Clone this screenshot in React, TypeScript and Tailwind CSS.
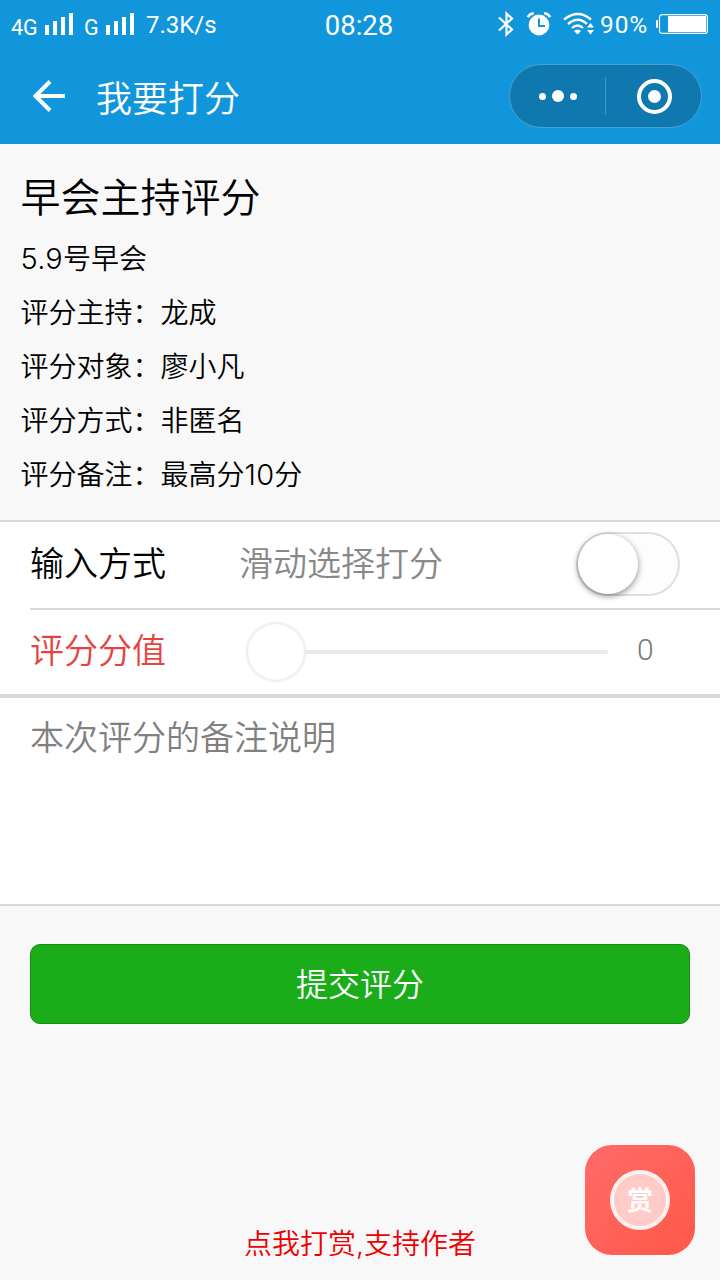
import { useState } from "react";
import type { ReactNode } from "react";

type InfoLine = {
  label: string;
  value: ReactNode;
};

const Digits = ({ children }: { children: ReactNode }) => (
  <span className="text-[29px] leading-none tracking-[0.2px]">{children}</span>
);

const infoLines: InfoLine[] = [
  { label: "评分主持", value: "龙成" },
  { label: "评分对象", value: "廖小凡" },
  { label: "评分方式", value: "非匿名" },
  { label: "评分备注", value: <>最高分<Digits>10</Digits>分</> },
];

const SignalBars = () => (
  <svg width="30" height="22" viewBox="0 0 30 22" fill="currentColor">
    <rect x="1" y="12" width="4" height="10" />
    <rect x="9" y="8" width="4" height="14" />
    <rect x="17" y="4" width="4" height="18" />
    <rect x="25" y="0" width="4" height="22" />
  </svg>
);

const StatusBar = () => (
  <div className="relative flex h-[50px] items-center justify-between pb-[2px] pl-[11px] pr-[12px] font-['Roboto',sans-serif] font-normal text-white">
    {/* Left */}
    <div className="flex items-center">
      <span className="w-[33px] pt-[7px] text-[21.5px] leading-[26px]">4G</span>
      <SignalBars />
      <span className="ml-[10px] w-[21px] pt-[7px] text-[21.5px] leading-[26px]">G</span>
      <SignalBars />
      <span className="ml-[11px] pt-[2px] text-[24px] leading-[28px]">7.3K/s</span>
    </div>

    {/* Clock sits over the middle whatever the sides hold */}
    <span className="absolute left-0 top-[11px] w-[718px] text-center text-[27.5px] leading-[30px]">
      08:28
    </span>

    {/* Right */}
    <div className="flex items-center">
      <svg width="16" height="26" viewBox="0 0 16 26" fill="none" stroke="currentColor" strokeWidth="2.2">
        <path d="M1 6.500 L14 18.500 L8.500 23.500 V2.500 L14 7.500 L1 19.500" />
      </svg>
      <svg className="ml-[13px]" width="24" height="24" viewBox="0 0 24 24">
        <circle cx="12" cy="13" r="10.400" fill="currentColor" />
        <path d="M0.8 5.2 Q2.5 1.6 6.8 1.2 M23.2 5.2 Q21.5 1.6 17.2 1.2" fill="none" stroke="currentColor" strokeWidth="2.6" />
        <path d="M12 6.500 V14 H18" fill="none" stroke="#1296db" strokeWidth="2" />
      </svg>
      <svg className="ml-[12px]" width="32" height="24" viewBox="0 0 32 24">
        <g fill="none" stroke="currentColor" strokeWidth="2.3">
          <path d="M1 7.5 Q15 -3.500 28 7.5" />
          <path d="M5 12 Q15 3.500 24 12" />
          <path d="M9 16 Q14.500 11 20 16" />
        </g>
        <path d="M11 19 Q14.500 16 18 19 L14.500 22.5 Z" fill="currentColor" />
        <path d="M27.500 11 L31 15.500 H24 Z M24 18 H31 L27.500 22.500 Z" fill="currentColor" />
      </svg>
      <span className="ml-[5px] w-[49px] pt-[2px] text-[24.5px] leading-[28px] tracking-[0.9px]">90%</span>
      <svg className="ml-[7px]" width="52" height="20" viewBox="0 0 52 20">
        <rect x="0" y="6" width="2" height="8" rx="1" fill="currentColor" />
        <rect x="3.500" y="0.600" width="47.800" height="18.800" rx="2.500" fill="none" stroke="currentColor" strokeWidth="1.2" />
        <rect x="12" y="2" width="38" height="16" fill="currentColor" />
      </svg>
    </div>
  </div>
);

const NavBar = () => (
  <div className="flex h-[94px] items-center pb-[2px] pl-[32px] pr-[18px] text-white">
    <button aria-label="返回">
      <svg width="34" height="34" viewBox="0 0 34 34" fill="none" stroke="currentColor" strokeWidth="4">
        <path d="M33 17 H4 M18 2.500 L3.500 17 L18 31.500" />
      </svg>
    </button>
    <h1 className="ml-[30px] flex-1 pt-[6px] text-[36px] leading-[48px]">我要打分</h1>

    <div className="flex h-[64px] w-[193px] items-center rounded-full border border-[#48a2d3] bg-[#0f78af]">
      <button className="flex w-[95px] items-center justify-center gap-[6px]" aria-label="更多">
        <span className="size-[7px] rounded-full bg-white" />
        <span className="size-[12px] rounded-full bg-white" />
        <span className="size-[7px] rounded-full bg-white" />
      </button>
      <span className="h-[38px] w-px bg-[#4498c4]" />
      <button className="flex flex-1 items-center justify-center pl-[2px]" aria-label="关闭">
        <span className="flex size-[35px] items-center justify-center rounded-full border-4 border-white">
          <span className="size-[13px] rounded-full bg-white" />
        </span>
      </button>
    </div>
  </div>
);

const App = () => {
  const [sliding, setSliding] = useState(false);
  const [score] = useState(0);

  return (
    <div className="flex h-[1280px] w-[720px] flex-col bg-[#f8f8f8] font-['Inter','Noto_Sans_CJK_SC',sans-serif] font-[350] text-black">
      <header className="h-[144px] bg-[#1296db]">
        <StatusBar />
        <NavBar />
      </header>

      {/* Info */}
      <section className="h-[376px] pl-[20.5px] pt-[23px]">
        <h2 className="text-[40px] leading-[62px]">早会主持评分</h2>
        <p className="mt-[3px] text-[28px] leading-[54px]"><Digits>5.9</Digits>号早会</p>
        {infoLines.map((line) => (
          <p key={line.label} className="text-[28px] leading-[54px]">
            {line.label}：{line.value}
          </p>
        ))}
      </section>

      {/* Form */}
      <section className="border-y-2 border-[#d9d9d9] bg-white text-[34px]">
        <div className="ml-[30px] flex h-[88px] items-center border-b-2 border-[#d9d9d9] pb-[2px] pr-[40px]">
          <span className="w-[209px] leading-[48px]">输入方式</span>
          <span className="flex-1 leading-[48px] text-[#888888]">滑动选择打分</span>
          <button
            onClick={() => setSliding(!sliding)}
            className={`flex h-[64px] w-[104px] rounded-full border-2 border-[#dfdfdf] bg-[#fdfdfd] ${sliding ? "justify-end" : ""}`}
          >
            <span className="size-[60px] rounded-full bg-white shadow-[0_2px_6px_rgba(0,0,0,0.45)]" />
          </button>
        </div>

        <div className="flex h-[84px] items-center pl-[30px]">
          <span className="w-[218px] pb-[2px] leading-[48px] text-[#e64340]">评分分值</span>
          <div className="flex w-[360px] items-center">
            <span className="size-[56px] rounded-full bg-white shadow-[0_0_4px_rgba(0,0,0,0.2)]" />
            <span className="h-[4px] flex-1 rounded-r-full bg-[#e9e9e9]" />
          </div>
          <span className="ml-[29px] pb-[5px] font-['Roboto',sans-serif] text-[30px] font-light leading-[40px] text-[#777777]">{score}</span>
        </div>

        <textarea
          className="block h-[210px] w-full resize-none border-t-4 border-[#d9d9d9] px-[30px] pt-[16px] leading-[48px] outline-none placeholder:text-[#808080]"
          placeholder="本次评分的备注说明"
        />
      </section>

      {/* Submit */}
      <button className="mx-[30px] mt-[38px] h-[80px] rounded-[10px] border border-[#168a15] bg-[#1aad19] pt-[2px] text-[32px] text-white">
        提交评分
      </button>

      {/* Reward */}
      <footer className="relative flex flex-1 items-end justify-center pb-[15px]">
        <span className="text-[28px] leading-[42px] text-[#ee0000]">点我打赏,支持作者</span>
        <button className="absolute bottom-[25px] right-[25px] flex size-[110px] items-center justify-center rounded-[27px] bg-linear-to-br from-[#ff6a68] to-[#ff5848]">
          <span className="flex size-[60px] items-center justify-center rounded-full border-4 border-[#fff0ef] bg-[#ffcbc8] text-[26px] font-bold text-white">
            赏
          </span>
        </button>
      </footer>
    </div>
  );
};

export default App;
